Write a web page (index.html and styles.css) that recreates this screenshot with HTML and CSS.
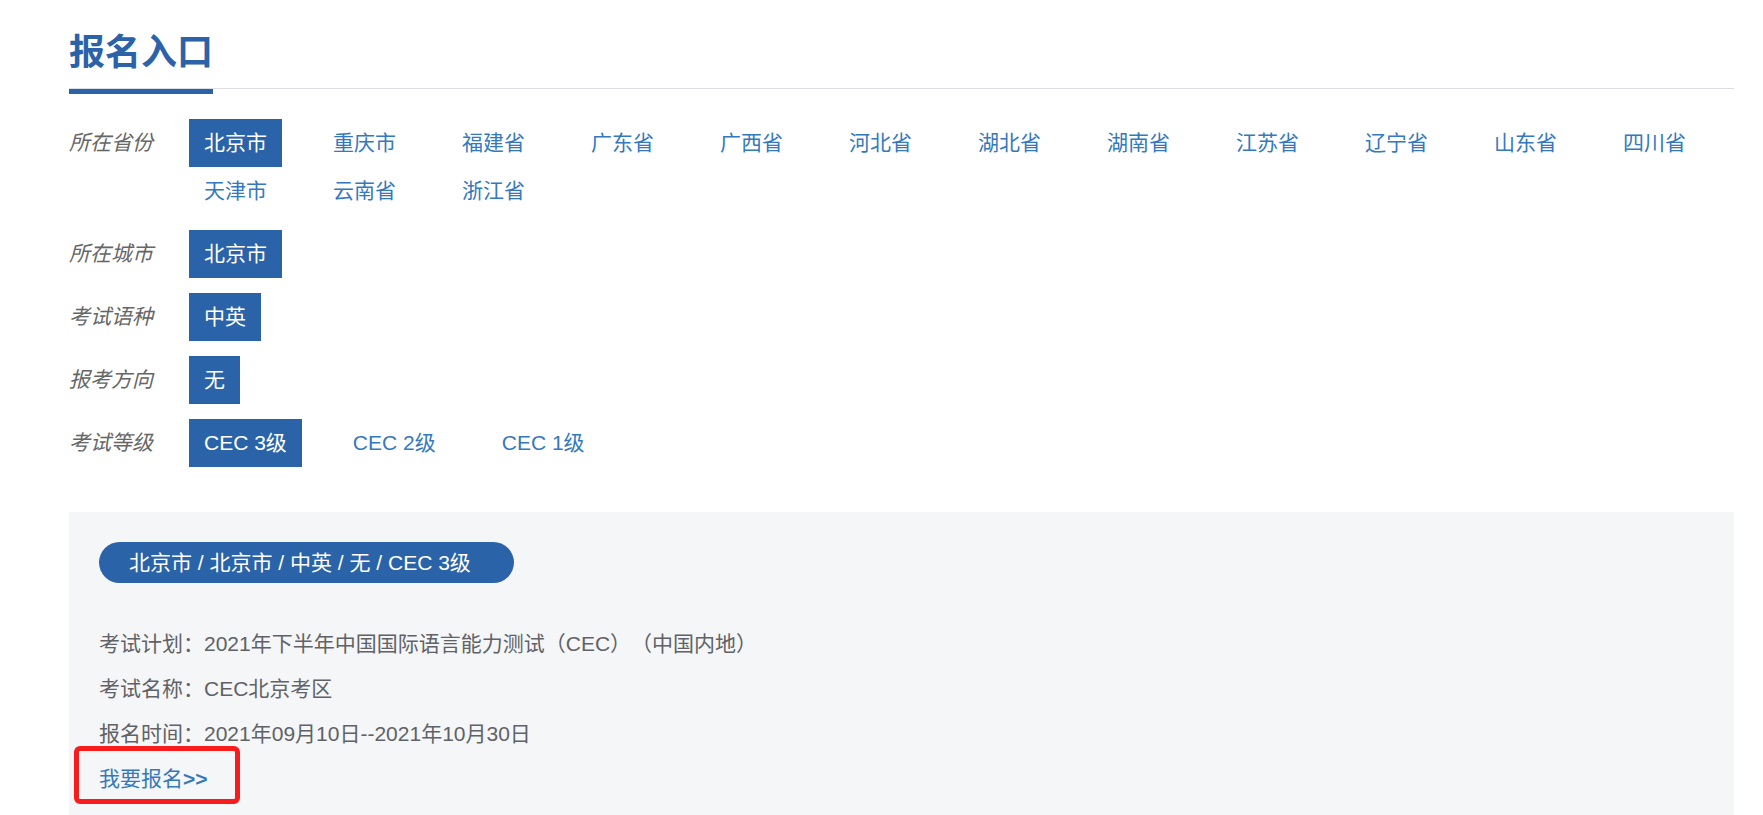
FILE: index.html
```html
<!DOCTYPE html>
<html lang="zh-CN">
  <head>
    <meta charset="UTF-8" />
    <meta name="viewport" content="width=device-width, initial-scale=1.0" />
    <title>报名入口</title>
    <link rel="stylesheet" href="styles.css">
  </head>
  <body>
    <div class="page">
      <div class="head">
        <h2 class="head-title">报名入口</h2>
      </div>
      <div class="head-bar"></div>

      <div class="filters">
        <div class="filter-row">
          <div class="filter-label">所在省份</div>
          <ul class="filter-opts">
            <li class="opt on">北京市</li>
            <li class="opt">重庆市</li>
            <li class="opt">福建省</li>
            <li class="opt">广东省</li>
            <li class="opt">广西省</li>
            <li class="opt">河北省</li>
            <li class="opt">湖北省</li>
            <li class="opt">湖南省</li>
            <li class="opt">江苏省</li>
            <li class="opt">辽宁省</li>
            <li class="opt">山东省</li>
            <li class="opt">四川省</li>
            <li class="opt">天津市</li>
            <li class="opt">云南省</li>
            <li class="opt">浙江省</li>
          </ul>
        </div>

        <div class="filter-row">
          <div class="filter-label">所在城市</div>
          <ul class="filter-opts">
            <li class="opt on">北京市</li>
          </ul>
        </div>

        <div class="filter-row">
          <div class="filter-label">考试语种</div>
          <ul class="filter-opts">
            <li class="opt on">中英</li>
          </ul>
        </div>

        <div class="filter-row">
          <div class="filter-label">报考方向</div>
          <ul class="filter-opts">
            <li class="opt on">无</li>
          </ul>
        </div>

        <div class="filter-row">
          <div class="filter-label">考试等级</div>
          <ul class="filter-opts">
            <li class="opt on">CEC 3级</li>
            <li class="opt">CEC 2级</li>
            <li class="opt">CEC 1级</li>
          </ul>
        </div>
      </div>

      <div class="result">
        <div class="result-pill">北京市 / 北京市 / 中英 / 无 / CEC 3级</div>
        <ul class="result-info">
          <li>考试计划：2021年下半年中国国际语言能力测试（CEC）（中国内地）</li>
          <li>考试名称：CEC北京考区</li>
          <li>报名时间：2021年09月10日--2021年10月30日</li>
          <li><a class="signup" href="#">我要报名<b>&gt;&gt;</b></a></li>
        </ul>
      </div>
    </div>
  </body>
</html>
```

FILE: styles.css
```css
body {
  margin: 0;
  background-color: #fff;
  font-family: "Liberation Sans", "Noto Sans CJK SC", sans-serif;
  text-spacing-trim: space-all;
}

ul {
  list-style-type: none;
  margin: 0;
  padding: 0;
}

.page {
  width: 1665px;
  margin-left: 69px;
}

.head {
  padding-top: 28px;
  padding-bottom: 10px;
  border-bottom: 1px solid #dcdfe6;
}

.head-title {
  margin: 0;
  font-size: 36px;
  line-height: 50px;
  font-weight: bold;
  color: #2b62a8;
}

.head-bar {
  width: 144px;
  height: 5px;
  background-color: #2b62a8;
}

.filters {
  margin-top: 25px;
}

.filter-row {
  display: flex;
  margin-bottom: 15px;
}

.filter-row:last-child {
  margin-bottom: 0;
}

.filter-label {
  width: 120px;
  flex-shrink: 0;
  font-size: 21px;
  line-height: 48px;
  font-style: italic;
  color: #666;
}

.filter-opts {
  flex: 1;
  display: flex;
  flex-wrap: wrap;
  column-gap: 36px;
}

.opt {
  padding: 0 15px;
  font-size: 21px;
  line-height: 48px;
  color: #3479be;
  cursor: pointer;
}

.opt.on {
  background-color: #2b63a8;
  color: #fff;
}

.result {
  margin-top: 45px;
  padding: 30px 30px 14px;
  background-color: #f5f6f8;
}

.result-pill {
  display: inline-block;
  height: 41px;
  padding: 0 43px 0 30px;
  border-radius: 21px;
  background-color: #2b63a8;
  color: #fff;
  font-size: 21px;
  line-height: 41px;
}

.result-info {
  margin-top: 38px;
}

.result-info li {
  font-size: 21px;
  line-height: 45px;
  color: #606266;
}

.signup {
  position: relative;
  display: inline-block;
  color: #3479be;
  text-decoration: none;
}

/* red highlight around the link */
.signup::after {
  content: "";
  position: absolute;
  left: -25px;
  right: -32px;
  top: -10px;
  bottom: -3px;
  border: 5px solid #f71d1d;
  border-radius: 6px;
}
```
